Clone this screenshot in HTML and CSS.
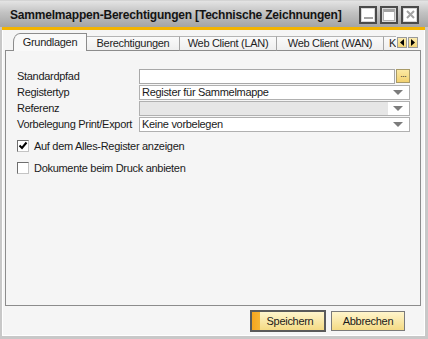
FILE: index.html
```html
<!DOCTYPE html>
<html lang="de">
<head>
  <meta charset="UTF-8" />
  <title>Sammelmappen-Berechtigungen</title>
  <link rel="stylesheet" href="styles.css">
</head>
<body>
  <div class="window">
    <div class="titlebar">
      <span class="title">Sammelmappen-Berechtigungen [Technische Zeichnungen]</span>
      <div class="title-btns">
        <button class="tbtn min"><span></span></button>
        <button class="tbtn max"><span></span></button>
        <button class="tbtn close">
          <svg width="9" height="9" viewBox="0 0 9 9"><path d="M1 1 L8 8 M8 1 L1 8" stroke="#a4a4a4" stroke-width="2"/></svg>
        </button>
      </div>
    </div>

    <div class="content">
      <div class="tabbar">
        <div class="tabs">
          <div class="tab active" style="width:74px">Grundlagen</div>
          <div class="tab" style="width:93px">Berechtigungen</div>
          <div class="tab" style="width:97px">Web Client (LAN)</div>
          <div class="tab" style="width:107px">Web Client (WAN)</div>
          <div class="tab tab-cut">K</div>
        </div>
        <div class="tab-scroll">
          <span class="arrow"><svg width="4" height="7" viewBox="0 0 4 7"><path d="M4 0 L0 3.5 L4 7 Z" fill="#000"/></svg></span>
          <span class="arrow"><svg width="4" height="7" viewBox="0 0 4 7"><path d="M0 0 L4 3.5 L0 7 Z" fill="#000"/></svg></span>
        </div>
      </div>

      <div class="panel">
        <div class="fields">
          <label class="lbl">Standardpfad</label>
          <div class="field-wrap">
            <div class="input"></div>
            <button class="browse">···</button>
          </div>

          <label class="lbl">Registertyp</label>
          <div class="select">
            <span>Register für Sammelmappe</span>
            <span class="caret"><svg width="10" height="5" viewBox="0 0 10 5"><path d="M0 0 L10 0 L5 5 Z" fill="#7c7c7c"/></svg></span>
          </div>

          <label class="lbl">Referenz</label>
          <div class="select disabled">
            <span></span>
            <span class="caret"><svg width="10" height="5" viewBox="0 0 10 5"><path d="M0 0 L10 0 L5 5 Z" fill="#7c7c7c"/></svg></span>
          </div>

          <label class="lbl">Vorbelegung Print/Export</label>
          <div class="select">
            <span>Keine vorbelegen</span>
            <span class="caret"><svg width="10" height="5" viewBox="0 0 10 5"><path d="M0 0 L10 0 L5 5 Z" fill="#7c7c7c"/></svg></span>
          </div>
        </div>

        <div class="checks">
          <div class="check">
            <span class="box">
              <svg width="10" height="10" viewBox="0 0 10 10"><path d="M1.5 4.5 L4 7 L8.5 1.5" fill="none" stroke="#000" stroke-width="2"/></svg>
            </span>
            <span>Auf dem Alles-Register anzeigen</span>
          </div>
          <div class="check">
            <span class="box"></span>
            <span>Dokumente beim Druck anbieten</span>
          </div>
        </div>
      </div>

      <div class="actions">
        <button class="btn primary">Speichern</button>
        <button class="btn">Abbrechen</button>
      </div>
    </div>
  </div>
</body>
</html>
```

FILE: styles.css
```css
* {
  box-sizing: border-box;
  margin: 0;
  padding: 0;
}

body {
  width: 428px;
  height: 339px;
  font-family: 'Liberation Sans', Arial, sans-serif;
  font-size: 11px;
  letter-spacing: -0.3px;
  color: #1a1a1a;
  background: #c8c8c8;
}

.window {
  width: 428px;
  height: 339px;
  display: flex;
  flex-direction: column;
  border-left: 2px solid #c8c8c8;
  border-right: 3px solid #c8c8c8;
  border-bottom: 3px solid #c8c8c8;
}

.titlebar {
  height: 27px;
  margin: 0 -3px 0 -2px;
  padding: 0 9px 0 10px;
  display: flex;
  align-items: center;
  justify-content: space-between;
  background: linear-gradient(to bottom, #e4e4e4 0%, #c2c2c2 45%, #a4a4a4 100%);
  border-top: 1px solid #d4d4d4;
}

.title {
  font-size: 12px;
  font-weight: bold;
  color: #141414;
  letter-spacing: -0.2px;
  white-space: nowrap;
  padding-top: 1px;
}

.title-btns {
  display: flex;
  gap: 3px;
  padding-top: 1px;
}

.tbtn {
  width: 18px;
  height: 18px;
  background: #fff;
  border: 2px solid #4a4a4a;
  box-shadow: inset 0 0 0 1px #d8d8d8;
  display: flex;
  align-items: center;
  justify-content: center;
}

.tbtn.min {
  align-items: flex-end;
  padding-bottom: 3px;
}

.tbtn.min span {
  width: 9px;
  height: 2px;
  background: #a4a4a4;
}

.tbtn.max {
  align-items: flex-start;
  padding: 1px;
}

.tbtn.max span {
  width: 12px;
  height: 12px;
  border: 1px solid #b0b0b0;
  border-top: 3px solid #a4a4a4;
}

.content {
  flex: 1;
  background: #f5f5f5;
  border-top: 3px solid #f3b400;
  box-shadow: inset 1px -1px 0 #ffffff, inset -1px 0 0 #ffffff;
  padding: 3px 4px 0 3px;
  display: flex;
  flex-direction: column;
}

.tabbar {
  display: flex;
  align-items: flex-end;
  height: 18px;
  margin-bottom: -1px;
  position: relative;
  z-index: 1;
}

.tabs {
  display: flex;
  align-items: flex-end;
  margin-left: 8px;
  width: 383px;
  height: 18px;
  overflow: hidden;
}

.tab {
  flex-shrink: 0;
  height: 15px;
  line-height: 13px;
  text-align: center;
  background: linear-gradient(to bottom, #fafafa, #eeeeee);
  border-top: 1px solid #b4b4b4;
  border-right: 1px solid #a4a4a4;
  border-bottom: 1px solid #8c8c8c;
  color: #1e1e1e;
}

.tab.active {
  height: 18px;
  line-height: 17px;
  background: #f9f9f9;
  border: 1px solid #8c8c8c;
  border-bottom: none;
  border-top-left-radius: 7px 9px;
}

.tab-cut {
  width: 40px;
  text-align: left;
  padding-left: 5px;
}

.tab-scroll {
  display: flex;
  gap: 1px;
  padding: 0 0 2px 1px;
  border-bottom: 1px solid #8c8c8c;
}

.arrow {
  width: 10px;
  height: 11px;
  background: linear-gradient(to bottom, #fcecb0, #f2d476);
  border: 1px solid #9a9a9a;
  display: flex;
  align-items: center;
  justify-content: center;
}

.panel {
  height: 256px;
  border: 1px solid #8c8c8c;
  padding: 18px 10px 0 11px;
}

.fields {
  display: grid;
  grid-template-columns: 122px 1fr;
  grid-auto-rows: 15px;
  row-gap: 1px;
  align-items: center;
}

.lbl {
  line-height: 15px;
  white-space: nowrap;
}

.field-wrap {
  display: flex;
  gap: 1px;
  height: 15px;
}

.input {
  flex: 1;
  background: #fff;
  border: 1px solid #a8a8a8;
}

.browse {
  width: 14px;
  height: 14px;
  background: linear-gradient(to bottom, #fbe9a4, #f2d170);
  border: 1px solid #a89a68;
  font-size: 9px;
  line-height: 8px;
  color: #333;
  letter-spacing: -1px;
  font-family: 'Liberation Sans', Arial, sans-serif;
}

.select {
  height: 15px;
  display: flex;
  justify-content: space-between;
  align-items: center;
  background: #fff;
  border: 1px solid #b0b0b0;
  padding-left: 2px;
  line-height: 13px;
}

.select.disabled {
  background: #e6e6e6;
}

.caret {
  width: 21px;
  height: 13px;
  display: flex;
  align-items: center;
  justify-content: center;
  background: #fff;
  padding-right: 2px;
}

.checks {
  margin-top: 8px;
  display: flex;
  flex-direction: column;
  gap: 10px;
}

.check {
  display: flex;
  align-items: center;
  gap: 5px;
  height: 12px;
}

.box {
  width: 12px;
  height: 12px;
  background: #fff;
  border: 1px solid;
  border-color: #6e6e6e #c4c4c4 #c4c4c4 #6e6e6e;
  display: flex;
  align-items: center;
  justify-content: center;
}

.actions {
  display: flex;
  justify-content: flex-end;
  align-items: center;
  gap: 5px;
  padding-right: 16px;
  margin-top: 4px;
  height: 22px;
}

.btn {
  width: 74px;
  height: 20px;
  font-family: 'Liberation Sans', Arial, sans-serif;
  font-size: 11px;
  letter-spacing: -0.3px;
  color: #1a1a1a;
  background: linear-gradient(to bottom, #fff5cc, #f4da84);
  border: 1px solid #7a7a7a;
}

.btn.primary {
  width: 76px;
  height: 22px;
  border: 2px solid #5a5a5a;
  background: linear-gradient(to right, #f6a51e 0, #f8b534 8px, transparent 8px),
              linear-gradient(to bottom, #fff5cc, #f4da84);
  padding-left: 4px;
}
```
